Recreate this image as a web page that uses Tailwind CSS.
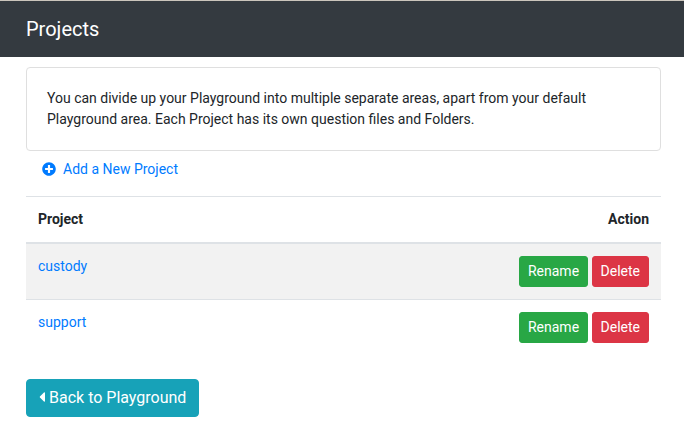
<!DOCTYPE html>
<html lang="en">
<head>
<meta charset="utf-8">
<meta name="viewport" content="width=device-width, initial-scale=1">
<title>Projects</title>
<script src="https://cdn.jsdelivr.net/npm/@tailwindcss/browser@4"></script>
</head>
<body class="bg-white font-[Roboto,sans-serif] text-sm leading-[21px] text-[#212529]">
<header class="border-t border-[#cbc5bc] bg-[#343a40] px-[26px] py-[13px]">
  <h1 class="text-xl leading-[30px] text-white">Projects</h1>
</header>
<main class="pt-[10px] pr-[23px] pb-4 pl-[26px]">
  <section class="rounded border border-[#dfdfdf] p-5">
    <p>You can divide up your Playground into multiple separate areas, apart from your default Playground area. Each Project has its own question files and Folders.</p>
  </section>
  <nav class="mb-2 flex">
    <a href="#" class="flex items-start gap-[7px] px-4 py-2 text-[#007bff]">
      <svg class="mt-[3px] size-[14px]" viewBox="0 0 512 512" fill="currentColor" aria-hidden="true"><path d="M256 8C119 8 8 119 8 256s111 248 248 248 248-111 248-248S393 8 256 8zm144 276c0 6.600-5.400 12-12 12h-92v92c0 6.600-5.400 12-12 12h-56c-6.600 0-12-5.400-12-12v-92h-92c-6.600 0-12-5.400-12-12v-56c0-6.600 5.400-12 12-12h92v-92c0-6.600 5.400-12 12-12h56c6.600 0 12 5.400 12 12v92h92c6.600 0 12 5.400 12 12v56z"/></svg>
      <span>Add a New Project</span>
    </a>
  </nav>
  <table class="mb-6 w-full border-separate border-spacing-0">
    <thead>
      <tr>
        <th scope="col" class="border-t border-b-2 border-[#dee2e6] p-3 text-left font-bold">Project</th>
        <th scope="col" class="border-t border-b-2 border-[#dee2e6] p-3 text-right font-bold">Action</th>
      </tr>
    </thead>
    <tbody>
      <tr class="bg-[#f2f2f2]">
        <td class="p-3 align-top"><a href="#" class="text-[#007bff]">custody</a></td>
        <td class="p-3 text-right align-top">
          <button type="button" class="rounded-[3px] border border-[#28a745] bg-[#28a745] px-2 py-1 text-white">Rename</button>
          <button type="button" class="rounded-[3px] border border-[#dc3545] bg-[#dc3545] px-2 py-1 text-white">Delete</button>
        </td>
      </tr>
      <tr>
        <td class="border-t border-[#dee2e6] p-3 align-top"><a href="#" class="text-[#007bff]">support</a></td>
        <td class="border-t border-[#dee2e6] p-3 text-right align-top">
          <button type="button" class="rounded-[3px] border border-[#28a745] bg-[#28a745] px-2 py-1 text-white">Rename</button>
          <button type="button" class="rounded-[3px] border border-[#dc3545] bg-[#dc3545] px-2 py-1 text-white">Delete</button>
        </td>
      </tr>
    </tbody>
  </table>
  <a href="#" class="inline-flex items-start gap-1 rounded border border-[#17a2b8] bg-[#17a2b8] px-3 py-1.5 text-base leading-6 text-white">
    <svg class="mt-[3px] h-4 w-[6px]" viewBox="0 0 192 512" fill="currentColor" aria-hidden="true"><path d="M192 127.338v257.324c0 17.818-21.543 26.741-34.142 14.142L29.196 270.142c-7.810-7.810-7.810-20.474 0-28.284l128.662-128.662c12.599-12.600 34.142-3.676 34.142 14.142z"/></svg>
    <span>Back to Playground</span>
  </a>
</main>
</body>
</html>
